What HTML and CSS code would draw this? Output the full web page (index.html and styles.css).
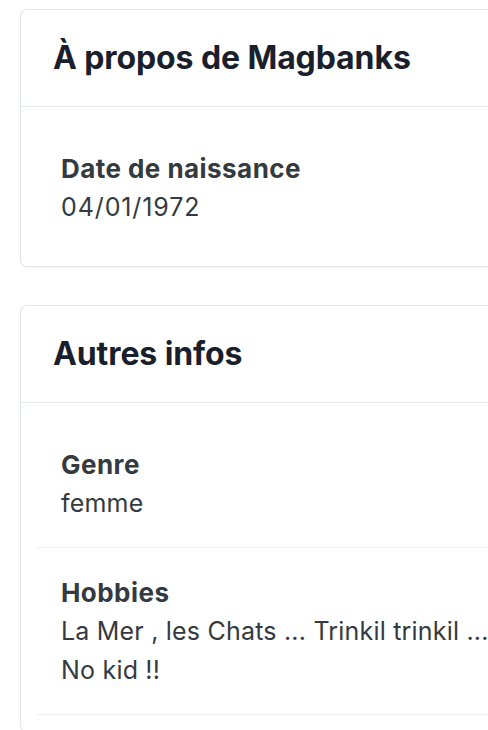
FILE: index.html
```html
<!DOCTYPE html>
<html lang="fr">
<head>
<meta charset="utf-8">
<title>Profil</title>
<link rel="stylesheet" href="styles.css">
</head>
<body>
<main class="page">
  <section class="card">
    <header class="card-header"><h2 class="card-title">À propos de Magbanks</h2></header>
    <div class="card-body">
      <div class="info-item plain">
        <div class="info-label">Date de naissance</div>
        <div class="info-value num">04/01/1972</div>
      </div>
    </div>
  </section>
  <section class="card">
    <header class="card-header"><h2 class="card-title">Autres infos</h2></header>
    <div class="card-body">
      <div class="info-item">
        <div class="info-label">Genre</div>
        <div class="info-value">femme</div>
      </div>
      <div class="info-item">
        <div class="info-label">Hobbies</div>
        <div class="info-value">La Mer , les Chats ... Trinkil trinkil ... No kid !!</div>
      </div>
    </div>
  </section>
</main>
</body>
</html>
```

FILE: styles.css
```css
html, body {
  margin: 0;
  padding: 0;
  background: #ffffff;
  overflow: hidden;
}
body {
  font-family: Inter, "Noto Sans", sans-serif;
  color: #343a40;
}
.page {
  display: flex;
  flex-direction: column;
  gap: 38px;
  padding: 9px 0 0 20px;
  width: 511px;
}
.card {
  border: 1px solid #e2e5ea;
  border-radius: 7px;
  background: #fff;
  box-shadow: 0 1px 3px rgba(0, 0, 0, 0.06);
}
.card-header {
  padding: 30px 32px;
  border-bottom: 1px solid #e5e7eb;
}
.card-title {
  margin: 0;
  font-size: 32px;
  line-height: 36px;
  font-weight: 700;
  color: #1a1f2b;
  letter-spacing: -0.1px;
}
.card-body {
  padding: 17px 0 16px 16px;
}
.info-item {
  padding: 25px 24px 24px 24px;
  border-bottom: 1px solid #efefef;
}
.info-item.plain {
  border-bottom: none;
  padding-bottom: 23px;
}
.info-label {
  font-size: 26px;
  line-height: 39px;
  font-weight: 700;
  letter-spacing: 0.45px;
  color: #343a40;
}
.info-value {
  font-size: 25px;
  line-height: 39px;
  font-weight: 400;
  letter-spacing: 0.2px;
  color: #343a40;
}
.info-value.num {
  letter-spacing: 0.9px;
}
```
